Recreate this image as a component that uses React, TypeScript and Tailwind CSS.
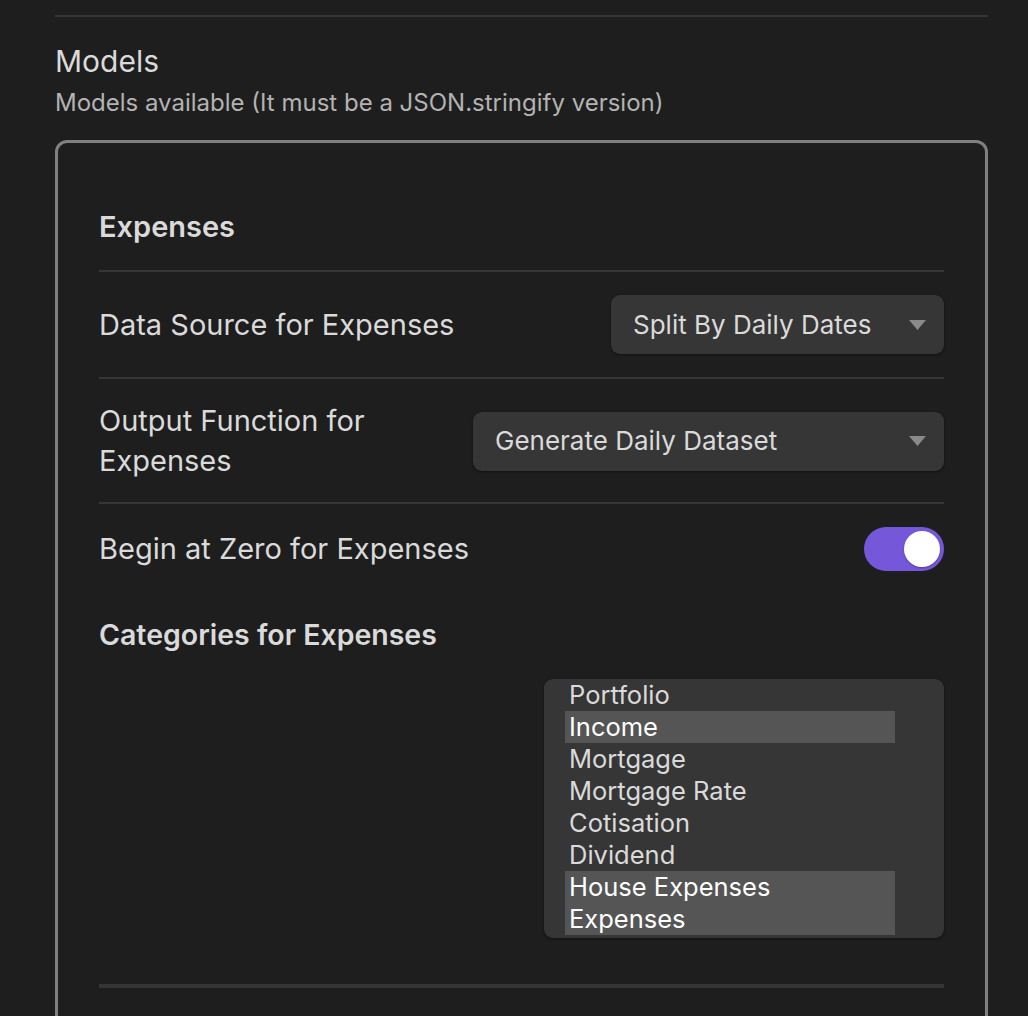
import React from "react";

const FONT = { fontFamily: "Inter, 'Noto Sans', 'Liberation Sans', sans-serif" };

function Triangle() {
  return (
    <svg width="17" height="10" viewBox="0 0 17 10" className="shrink-0">
      <path d="M0 0 L17 0 L8.5 10 Z" fill="#8a8a8a" />
    </svg>
  );
}

function Dropdown({ label, width }: { label: string; width: string }) {
  return (
    <div
      className={`${width} h-[59px] shrink-0 rounded-[9px] bg-[#363636] shadow-[0_1px_3px_rgba(0,0,0,0.45)] flex items-center justify-between pl-[22px] pr-[18px]`}
    >
      <span className="text-[26px] leading-[32px] text-[#dadada] whitespace-nowrap">{label}</span>
      <Triangle />
    </div>
  );
}

const items = [
  { name: "Portfolio", sel: false },
  { name: "Income", sel: true },
  { name: "Mortgage", sel: false },
  { name: "Mortgage Rate", sel: false },
  { name: "Cotisation", sel: false },
  { name: "Dividend", sel: false },
  { name: "House Expenses", sel: true },
  { name: "Expenses", sel: true },
];

export default function App() {
  return (
    <div style={FONT} className="w-full h-[1016px] overflow-hidden bg-[#1e1e1e] pl-[55px] pr-[40px]">
      <div className="pt-[15px]">
        <div className="h-[2px] bg-[#363636]" />
      </div>
      <div className="pt-[25px] text-[30px] leading-[38px] text-[#dadada]">Models</div>
      <div className="pt-[8px] text-[24px] leading-[30px] text-[#b3b3b3]">
        Models available (It must be a JSON.stringify version)
      </div>
      <div className="mt-[22px] h-[900px] rounded-[12px] border-[3px] border-[#808080] px-[41px]">
        <div className="pt-[66px] pb-[25px] border-b-2 border-[#363636] text-[29px] leading-[36px] font-semibold text-[#dadada]">
          Expenses
        </div>
        <div className="py-[23px] flex items-center justify-between border-b-2 border-[#363636]">
          <span className="text-[29px] leading-[36px] text-[#dadada]">Data Source for Expenses</span>
          <Dropdown label="Split By Daily Dates" width="w-[333px]" />
        </div>
        <div className="pt-[22px] pb-[21px] flex items-center justify-between border-b-2 border-[#363636]">
          <span className="text-[29px] leading-[40px] text-[#dadada] w-[320px]">
            Output Function for Expenses
          </span>
          <Dropdown label="Generate Daily Dataset" width="w-[471px]" />
        </div>
        <div className="py-[23px] flex items-center justify-between">
          <span className="text-[29px] leading-[36px] text-[#dadada]">Begin at Zero for Expenses</span>
          <div className="w-[80px] h-[44px] rounded-full bg-[#7558da] flex items-center justify-end pr-[4px]">
            <div className="w-[36px] h-[36px] rounded-full bg-white shadow-[0_1px_2px_rgba(0,0,0,0.3)]" />
          </div>
        </div>
        <div className="pt-[23px] text-[28.5px] leading-[36px] font-semibold text-[#dadada]">
          Categories for Expenses
        </div>
        <div className="mt-[26px] flex justify-end">
          <div className="w-[400px] h-[259px] rounded-[9px] bg-[#363636] shadow-[0_1px_3px_rgba(0,0,0,0.45)] pl-[21px]">
            {items.map((it) => (
              <div
                key={it.name}
                className={`w-[330px] h-[32px] pl-[4px] text-[25.5px] leading-[32px] whitespace-nowrap ${
                  it.sel ? "bg-[#555555] text-white" : "text-[#dadada]"
                }`}
              >
                {it.name}
              </div>
            ))}
          </div>
        </div>
        <div className="mt-[46px] h-[4px] bg-[#353535]" />
      </div>
    </div>
  );
}
